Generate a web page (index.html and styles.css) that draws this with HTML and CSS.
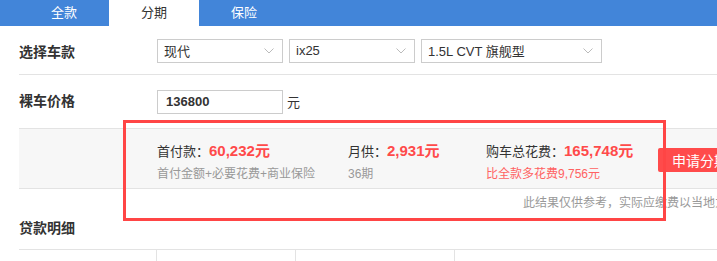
FILE: index.html
```html
<!DOCTYPE html>
<html lang="zh-CN">
<head>
  <meta charset="UTF-8">
  <title>分期计算</title>
  <link rel="stylesheet" href="styles.css">
</head>
<body>
  <div class="tabs">
    <div class="tab">全款</div>
    <div class="tab active">分期</div>
    <div class="tab">保险</div>
  </div>

  <div class="calc">
    <div class="row row-car">
      <div class="label">选择车款</div>
      <div class="select w-brand"><span>现代</span>
        <svg class="arrow" width="10" height="6" viewBox="0 0 10 6"><path d="M0.5 0.5 L5 5 L9.5 0.5" fill="none" stroke="#bbb" stroke-width="1"/></svg>
      </div>
      <div class="select w-model"><span>ix25</span>
        <svg class="arrow" width="10" height="6" viewBox="0 0 10 6"><path d="M0.5 0.5 L5 5 L9.5 0.5" fill="none" stroke="#bbb" stroke-width="1"/></svg>
      </div>
      <div class="select w-trim"><span>1.5L CVT 旗舰型</span>
        <svg class="arrow" width="10" height="6" viewBox="0 0 10 6"><path d="M0.5 0.5 L5 5 L9.5 0.5" fill="none" stroke="#bbb" stroke-width="1"/></svg>
      </div>
    </div>

    <div class="row row-price">
      <div class="label">裸车价格</div>
      <input class="price" type="text" value="136800">
      <span class="unit">元</span>
    </div>

    <div class="result">
      <div class="item item-first">
        <div class="title">首付款：<b>60,232元</b></div>
        <div class="sub">首付金额+必要花费+商业保险</div>
      </div>
      <div class="item item-month">
        <div class="title">月供：<b>2,931元</b></div>
        <div class="sub">36期</div>
      </div>
      <div class="item item-total">
        <div class="title">购车总花费：<b>165,748元</b></div>
        <div class="sub red">比全款多花费9,756元</div>
      </div>
      <button class="apply">申请分期</button>
    </div>
    <div class="note">此结果仅供参考，实际应缴费以当地为准。</div>

    <div class="section-title">贷款明细</div>
    <div class="table-head">
      <div class="cell"></div>
      <div class="cell"></div>
      <div class="cell"></div>
      <div class="cell"></div>
    </div>

    <div class="highlight"></div>
  </div>
</body>
</html>
```

FILE: styles.css
```css
body {
  margin: 0;
  padding: 0;
  font-family: "Liberation Sans", "Noto Sans CJK SC", sans-serif;
  color: #333;
  background-color: #fff;
  overflow: hidden;
}

.tabs {
  display: flex;
  height: 26px;
  padding-left: 19px;
  background-color: #4285d9;
}

.tab {
  width: 90px;
  line-height: 26px;
  text-align: center;
  font-size: 13px;
  color: #fff;
}

.tab.active {
  background-color: #fff;
  color: #333;
}

.calc {
  position: relative;
  margin-left: 19px;
  width: 760px;
}

.row {
  display: flex;
  align-items: center;
  border-bottom: 1px solid #e3e3e3;
}

.row-car {
  height: 47px;
  padding-top: 1px;
}

.row-price {
  height: 53px;
}

.label {
  width: 138px;
  font-size: 14px;
  font-weight: bold;
  color: #333;
}

.row-price .label {
  margin-top: -3px;
}

.select {
  display: flex;
  align-items: center;
  justify-content: space-between;
  height: 24px;
  box-sizing: border-box;
  padding: 0 8px 0 6px;
  margin-right: 6px;
  border: 1px solid #ccc;
  font-size: 13px;
  color: #333;
}

.w-brand { width: 126px; }
.w-model { width: 126px; }
.w-trim { width: 181px; }

.price {
  width: 126px;
  height: 24px;
  box-sizing: border-box;
  padding: 0 8px;
  border: 1px solid #ccc;
  font-family: inherit;
  font-size: 13px;
  font-weight: bold;
  color: #333;
}

.unit {
  margin-left: 4px;
  font-size: 13px;
}

.result {
  display: flex;
  height: 60px;
  box-sizing: border-box;
  padding-left: 138px;
  background-color: #f7f7f7;
  border-bottom: 1px solid #e3e3e3;
}

.item {
  padding-top: 11px;
}

.item-first { width: 191px; }
.item-month { width: 138px; }
.item-total { width: 172px; }

.title {
  font-size: 13px;
  line-height: 22px;
  color: #333;
}

.title b {
  font-size: 15px;
  color: #ff4a4a;
}

.sub {
  margin-top: 1px;
  font-size: 12px;
  line-height: 20px;
  color: #999;
}

.sub.red {
  color: #ff6262;
}

.apply {
  align-self: flex-start;
  margin-top: 19px;
  width: 82px;
  height: 24px;
  padding: 0 0 0 14px;
  text-align: left;
  border: none;
  border-radius: 2px;
  background-color: #ff4b4b;
  color: #fff;
  font-family: inherit;
  font-size: 14px;
}

.note {
  height: 28px;
  line-height: 28px;
  padding-right: 28px;
  text-align: right;
  font-size: 12px;
  color: #999;
}

.section-title {
  height: 32px;
  line-height: 22px;
  font-size: 14px;
  font-weight: bold;
  color: #333;
}

.table-head {
  display: grid;
  grid-template-columns: 137px 139px 159px 1fr;
  height: 30px;
  border-top: 1px solid #e3e3e3;
}

.cell + .cell {
  border-left: 1px solid #e3e3e3;
}

.highlight {
  position: absolute;
  left: 104px;
  top: 94px;
  width: 537px;
  height: 95px;
  border: 3px solid #ff4545;
}
```
